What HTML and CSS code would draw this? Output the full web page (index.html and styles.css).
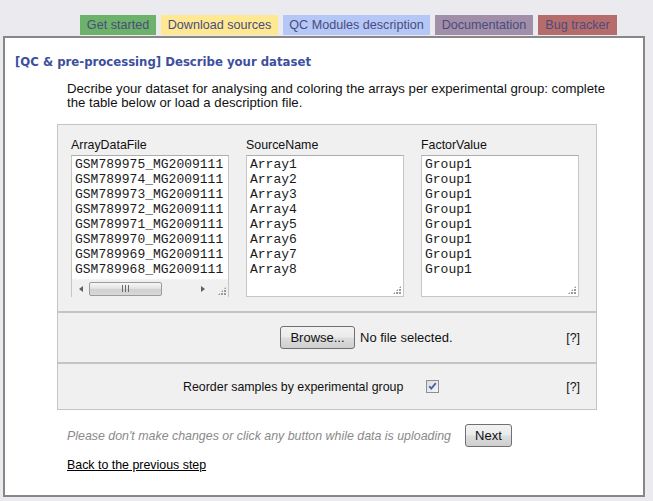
FILE: index.html
```html
<!DOCTYPE html>
<html>
<head>
<meta charset="utf-8">
<title>Describe your dataset</title>
<link rel="stylesheet" href="styles.css">
</head>
<body>
<nav class="tabs">
  <a class="tab tab-green">Get started</a>
  <a class="tab tab-yellow">Download sources</a>
  <a class="tab tab-blue">QC Modules description</a>
  <a class="tab tab-purple">Documentation</a>
  <a class="tab tab-red">Bug tracker</a>
</nav>
<div class="main">
  <h1 class="title">[QC &amp; pre-processing] Describe your dataset</h1>
  <div class="content">
    <p class="intro">Decribe your dataset for analysing and coloring the arrays per experimental group: complete the table below or load a description file.</p>
    <div class="panel">
      <div class="section cols">
        <div class="col">
          <label class="col-label">ArrayDataFile</label>
          <div class="tbox">
            <textarea class="ta ta-short" wrap="off" spellcheck="false">GSM789975_MG2009111
GSM789974_MG2009111
GSM789973_MG2009111
GSM789972_MG2009111
GSM789971_MG2009111
GSM789970_MG2009111
GSM789969_MG2009111
GSM789968_MG2009111</textarea>
            <div class="hscroll">
              <span class="arrow arrow-left"></span>
              <span class="track"><span class="thumb"><span class="grip-lines"></span></span></span>
              <span class="arrow arrow-right"></span>
              <span class="corner"><span class="grip"></span></span>
            </div>
          </div>
        </div>
        <div class="col">
          <label class="col-label">SourceName</label>
          <div class="tbox">
            <textarea class="ta" spellcheck="false">Array1
Array2
Array3
Array4
Array5
Array6
Array7
Array8</textarea>
            <span class="grip grip-over"></span>
          </div>
        </div>
        <div class="col">
          <label class="col-label">FactorValue</label>
          <div class="tbox">
            <textarea class="ta" spellcheck="false">Group1
Group1
Group1
Group1
Group1
Group1
Group1
Group1</textarea>
            <span class="grip grip-over"></span>
          </div>
        </div>
      </div>
      <div class="section row-file">
        <button class="btn btn-browse">Browse...</button>
        <span class="file-state">No file selected.</span>
        <span class="help">[?]</span>
      </div>
      <div class="section row-check">
        <span class="check-label">Reorder samples by experimental group</span>
        <svg class="checkbox" width="13" height="13" viewBox="0 0 13 13">
          <defs>
            <linearGradient id="cbg" x1="0" y1="0" x2="1" y2="1">
              <stop offset="0" stop-color="#dcdcdc"/>
              <stop offset="1" stop-color="#f6f6f6"/>
            </linearGradient>
          </defs>
          <rect x="0.5" y="0.5" width="12" height="12" fill="url(#cbg)" stroke="#8e8f8f"/>
          <path d="M3.2 6.2 L5.3 8.6 L9.8 3.2" fill="none" stroke="#4a5fb0" stroke-width="1.8"/>
        </svg>
        <span class="help">[?]</span>
      </div>
    </div>
    <div class="actions">
      <span class="warn">Please don't make changes or click any button while data is uploading</span>
      <button class="btn btn-next">Next</button>
    </div>
    <a class="back" href="#">Back to the previous step</a>
  </div>
</div>
</body>
</html>
```

FILE: styles.css
```css
html, body {
  margin: 0;
  padding: 0;
}
body {
  background: #ebeaef;
  font-family: "Liberation Sans", Arial, sans-serif;
  font-size: 12.4px;
  color: #000;
}

.tabs {
  display: flex;
  gap: 5px;
  padding: 15px 0 0 80px;
  height: 20px;
}
.tab {
  display: block;
  height: 20px;
  line-height: 20px;
  text-align: center;
  font-size: 12.6px;
  color: #4a4c7c;
  text-decoration: none;
  white-space: nowrap;
}
.tab-green { background: #6db26b; width: 76px; }
.tab-yellow { background: #ffe892; width: 117px; }
.tab-blue { background: #b4c7f6; width: 147px; }
.tab-purple { background: #a18ea9; width: 98px; }
.tab-red { background: #b76c6c; width: 79px; }

.main {
  margin: 1px 0 0 3px;
  width: 638px;
  height: 457px;
  background: #fff;
  border: 2px solid #878787;
}

.title {
  margin: 0;
  padding: 15px 0 0 10px;
  font-family: "DejaVu Sans", Verdana, sans-serif;
  font-stretch: condensed;
  font-size: 13px;
  line-height: 17px;
  font-weight: bold;
  color: #3c4f9e;
}

.content {
  padding-left: 52px;
  width: 540px;
}

.intro {
  width: 560px;
  margin: 12px 0 14px;
  padding-left: 10px;
  font-size: 13.2px;
  line-height: 14px;
  color: #111;
}

.panel {
  background: #f0f0f0;
}
.section {
  border: 1px solid #c4c4c4;
}

.cols {
  display: flex;
  gap: 17px;
  padding: 13px 0 14px 13px;
}
.col {
  display: flex;
  flex-direction: column;
  width: 158px;
}
.col-label {
  line-height: 15px;
  margin-bottom: 2px;
  color: #111;
}
.tbox {
  position: relative;
  display: flex;
  flex-direction: column;
  width: 156px;
  height: 140px;
  border: 1px solid #c6c6c6;
  border-top-color: #adadad;
  background: #fff;
}
.ta {
  flex: 1;
  margin: 0;
  border: 0;
  padding: 1px 3px;
  resize: none;
  overflow: hidden;
  outline: none;
  font-family: "Liberation Mono", "Courier New", monospace;
  font-size: 13px;
  line-height: 15px;
  color: #1a1a1a;
  background: #fff;
  white-space: pre;
}
.ta-short {
  flex: 0 0 auto;
  height: 121px;
}

.hscroll {
  display: flex;
  align-items: center;
  height: 17px;
  background: #f0f0f0;
  border-top: 1px solid #f4f4f4;
}
.arrow {
  width: 17px;
  height: 17px;
  display: flex;
  align-items: center;
  justify-content: center;
}
.arrow-left::before {
  content: "";
  border-style: solid;
  border-width: 3.5px 4px 3.5px 0;
  border-color: transparent #606060 transparent transparent;
}
.arrow-right::before {
  content: "";
  border-style: solid;
  border-width: 3.5px 0 3.5px 4px;
  border-color: transparent transparent transparent #606060;
}
.track {
  flex: 1;
  height: 15px;
  display: flex;
  align-items: center;
}
.thumb {
  width: 73px;
  height: 14px;
  border: 1px solid #9b9b9b;
  border-radius: 2px;
  background: linear-gradient(#f7f7f7, #e3e3e3 45%, #d0d0d0 55%, #d9d9d9);
  display: flex;
  align-items: center;
  justify-content: center;
  box-sizing: border-box;
}
.grip-lines {
  width: 7px;
  height: 7px;
  background: repeating-linear-gradient(90deg, #6a6a6a 0 1px, transparent 1px 3px);
}
.corner {
  width: 17px;
  height: 17px;
  position: relative;
  background: #f0f0f0;
}
.grip {
  position: absolute;
  right: 2px;
  bottom: 2px;
  width: 8px;
  height: 8px;
  background:
    radial-gradient(circle at 1px 1px, #9a9a9a 0.9px, transparent 1px) 0 0 / 3px 3px;
  clip-path: polygon(100% 0, 100% 100%, 0 100%);
}

.row-file {
  height: 49px;
  display: flex;
  align-items: center;
  padding: 0 16px 0 222px;
}
.btn {
  font-family: "Liberation Sans", Arial, sans-serif;
  font-size: 13px;
  color: #111;
  border: 1px solid #707070;
  border-radius: 3px;
  background: linear-gradient(#f2f2f2, #ebebeb 48%, #dddddd 52%, #cfcfcf);
  padding: 0;
}
.btn-browse {
  width: 75px;
  height: 23px;
}
.file-state {
  margin-left: 5px;
  font-size: 13px;
  color: #111;
}
.help {
  margin-left: auto;
  color: #111;
}

.row-check {
  height: 45px;
  display: flex;
  align-items: center;
  padding: 0 16px 0 125px;
}
.check-label {
  color: #111;
}
.checkbox {
  margin-left: 23px;
  display: block;
}

.actions {
  display: flex;
  align-items: center;
  margin-top: 14px;
  padding-left: 10px;
  height: 23px;
}
.warn {
  font-style: italic;
  color: #8a8a8a;
}
.btn-next {
  margin-left: 14px;
  width: 47px;
  height: 23px;
}
.back {
  display: inline-block;
  margin: 11px 0 0 10px;
  color: #000;
  text-decoration: underline;
}
```
